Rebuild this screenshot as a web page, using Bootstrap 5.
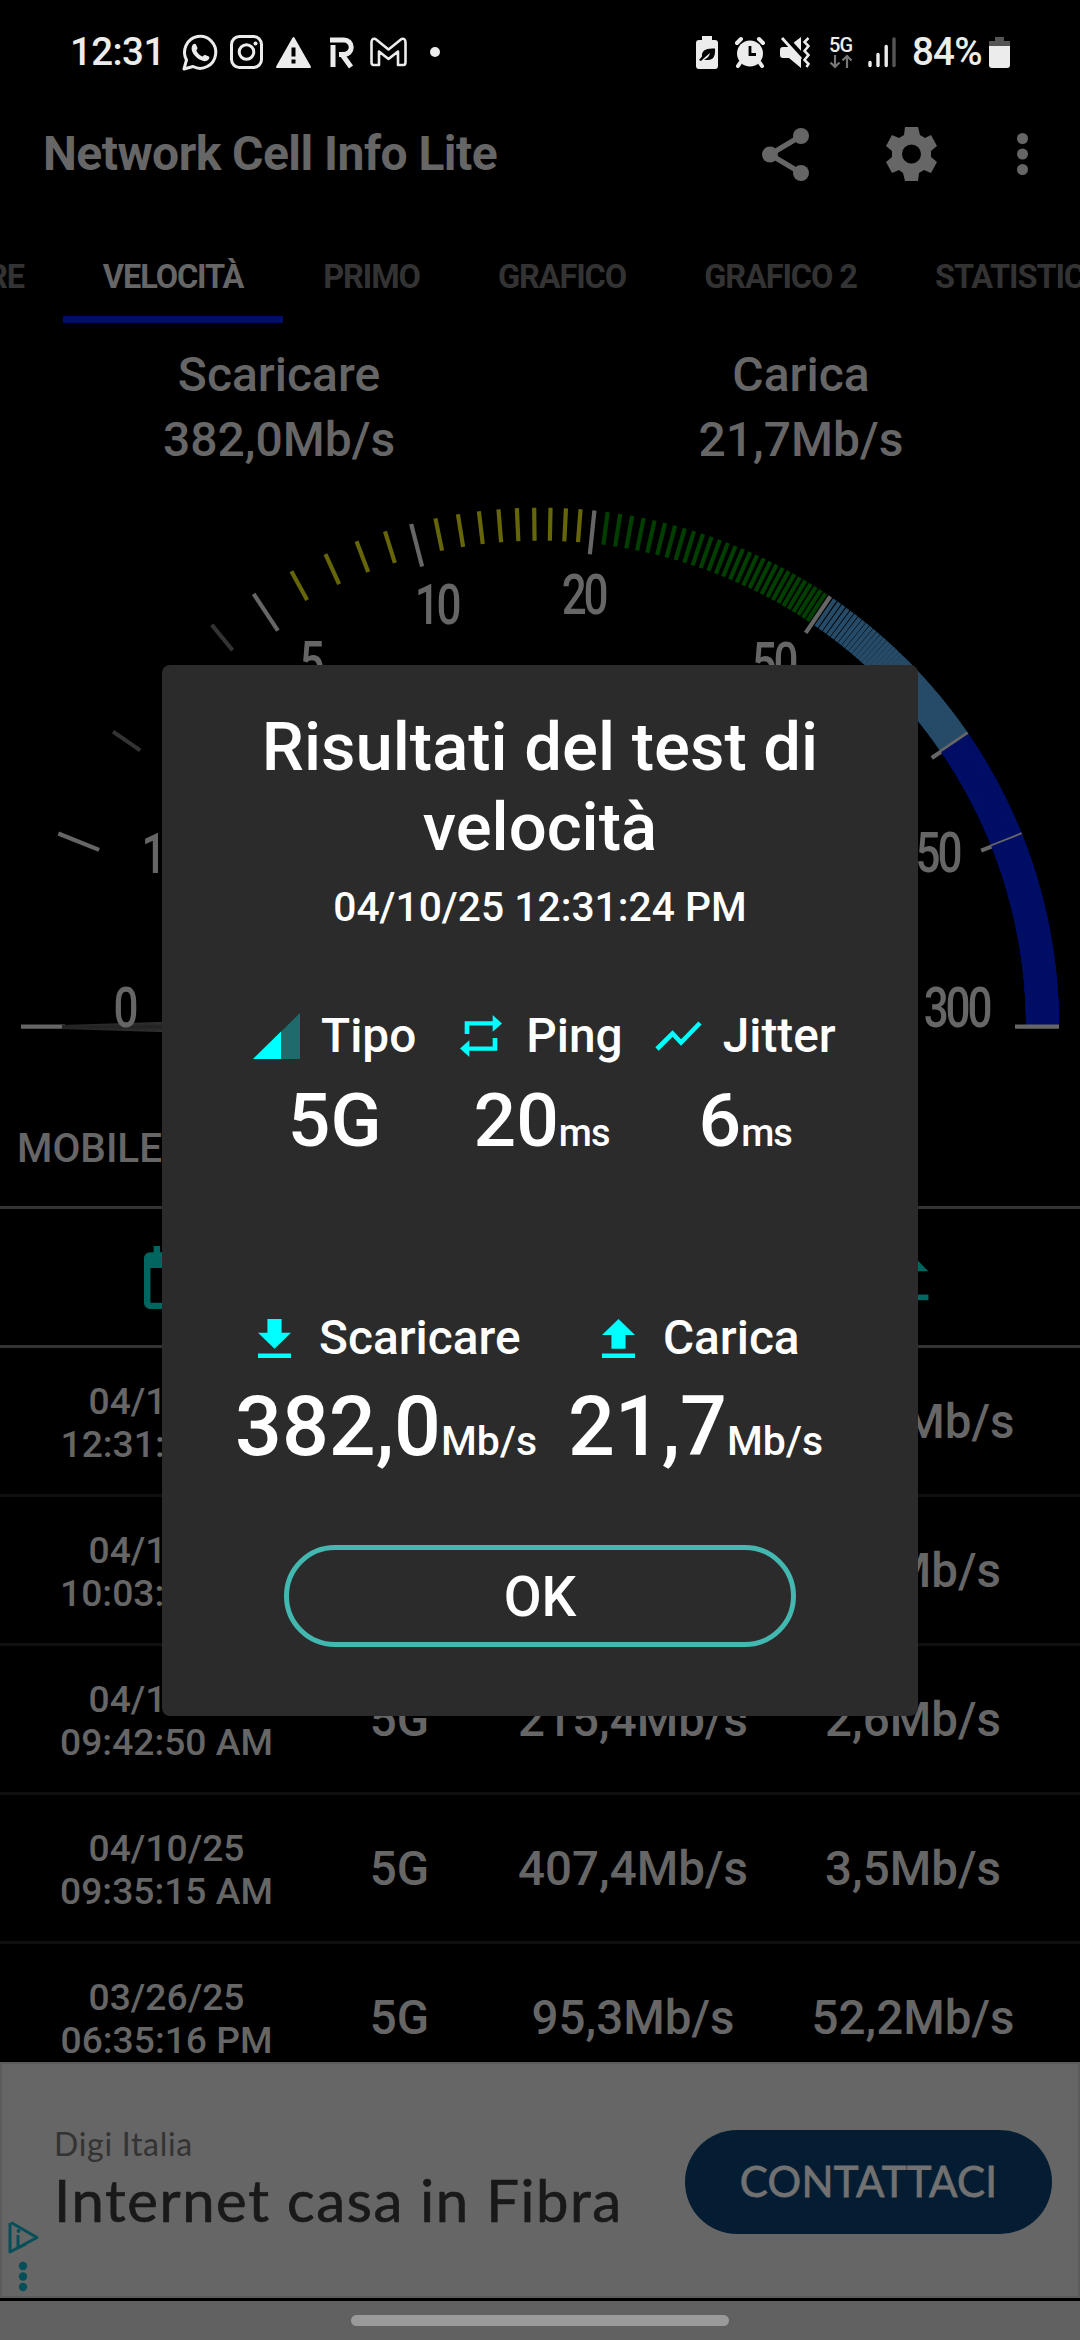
<!DOCTYPE html>
<html lang="it">
<head>
<meta charset="utf-8">
<meta name="viewport" content="width=device-width, initial-scale=1">
<title>Network Cell Info Lite</title>
<link href="https://cdn.jsdelivr.net/npm/bootstrap@5.3.0/dist/css/bootstrap.min.css" rel="stylesheet">
<style>
  body { background:#000; color:#666; font-family:Roboto,"Liberation Sans",sans-serif; font-weight:500; width:1080px; overflow:hidden; }
  svg { display:block; flex:none; overflow:visible; }
  .phone { width:1080px; height:2340px; }
  .status { height:104px; color:#ececec; font-size:38.5px; line-height:44px; padding-left:70px; }
  .status .clock { width:93px; letter-spacing:-.6px; }
  .status .pct { width:71px; letter-spacing:-.8px; }
  .appbar { height:100px; padding-left:43px; }
  .appbar h1 { font-size:48px; font-weight:700; letter-spacing:-.55px; width:719px; line-height:60px; }
  .tabstrip { height:119px; margin-left:-62px; }
  .tabstrip .nav-link { color:#333; border-radius:0; font-size:32.5px; font-weight:700; letter-spacing:-1.1px; line-height:56px; padding:45px 0 11px; border-bottom:7px solid transparent; text-align:center; white-space:nowrap; flex:none; }
  .tabstrip .nav-link.active { color:#666; border-color:#000e66; background:none; }
  .speeds { padding:19px 18px 0; font-size:48px; line-height:65px; height:149px; }
  .net { height:106px; font-size:40.5px; line-height:96px; padding-left:17px; }
  .icons-row { height:142px; border-top:3px solid #333; border-bottom:3px solid #333; }
  .history { height:714px; }
  .hrow { height:149px; padding-top:3px; border-bottom:3px solid #0f0f0f; font-size:47.5px; flex:none; }
  .c-date { width:333px; } .c-type { width:133px; } .c-down { width:334px; } .c-up { width:226px; }
  .when { font-size:37.2px; line-height:43px; }
  .ad { height:236px; background:#666; border:2px solid #5c5c5c; font-family:Lato,sans-serif; padding:0 26px 0 4px; }
  .ad .side { width:48px; padding-top:156px; }
  .ad .brand { color:#333; font-size:32px; line-height:38px; font-weight:400; letter-spacing:.7px; margin-top:61px; }
  .ad .headline { color:#191919; font-size:58px; line-height:70px; margin-top:2px; letter-spacing:1.6px; -webkit-text-stroke:.7px #191919; white-space:nowrap; font-weight:400; }
  .ad .cta { width:367px; height:104px; background:#041d33; color:#717171; border:0; font-size:42px; letter-spacing:.3px; -webkit-text-stroke:.8px #717171; margin-top:3px; }
  .navzone { height:39px; margin-top:3px; background:#616161; padding-top:14px; }
  .navzone div { width:378px; height:11px; background:#9a9a9a; }
  .result { left:162px; top:665px; width:756px; height:1051px; background:#2b2b2b; border-radius:8px; color:#fff; padding-top:42px; }
  .result h2 { font-size:67px; line-height:80px; font-weight:500; }
  .result .stamp { font-size:40.8px; line-height:48px; margin-top:16px; }
  .result .lbl { font-size:47.8px; line-height:60px; }
  .result .big { line-height:90px; white-space:nowrap; }
  .unit { font-size:41px; }
  .unit-ms { font-size:38px; letter-spacing:-1px; }
  .m-top { margin:75px 0 0 91px; }
  .m-top .big { font-size:75px; margin-top:9px; }
  .m-bot { margin:130px 95px 0 73px; }
  .m-bot .big { font-size:82.500px; margin-top:14px; }
  .ok { width:512px; height:102px; border:5px solid #43b8b0; color:#fff; font-size:55px; font-weight:500; line-height:92px; padding:1px 0 0; margin-top:59px; }
</style>
</head>
<body>
<div class="phone position-relative overflow-hidden d-flex flex-column">

  <div class="status d-flex align-items-center">
    <span class="clock">12:31</span>
    <svg style="margin-left:19px" width="36" height="37" viewBox="0 0 36 37" fill="none" stroke="#ececec"><path d="M2 35l2.500-9A15.600 16 0 1 1 11 32.500Z" stroke-width="3" stroke-linejoin="round"/><path d="M11 10.500c1-1 2.500-1 3 0l1.500 3.500c.3 1-1.500 2-1 3 1.300 2.500 3.200 4.300 5.800 5.400 1 .4 2-2 3-1.500l3.500 1.700c1 .6.6 2-.3 3-1.500 1.700-4 2-6.500 1C15 24.800 11.500 21 10 17c-1-3 0-5.500 1-6.500z" fill="#ececec" stroke="none"/></svg>
    <svg style="margin-left:12px" width="33" height="34" viewBox="0 0 33 34" fill="none" stroke="#ececec" stroke-width="3"><rect x="1.500" y="1.500" width="30" height="31" rx="8"/><circle cx="16.500" cy="17" r="7.300"/><circle cx="25.500" cy="8.500" r="2" fill="#ececec" stroke="none"/></svg>
    <svg style="margin-left:13px" width="35" height="31" viewBox="0 0 35 31"><path d="M17.500 1L34 30H1Z" fill="#ececec" stroke="#ececec" stroke-linejoin="round" stroke-width="2"/><path d="M15.500 10.500h4v9h-4zM15.500 22.500h4v4h-4z" fill="#000"/></svg>
    <svg style="margin-left:19px" width="24" height="31" viewBox="0 0 24 31" fill="none" stroke="#ececec" stroke-width="5"><path d="M0 3h14a6.500 6.500 0 0 1 0 14.500h-5M3 30V8M11 16l10 14"/></svg>
    <svg style="margin-left:16px" width="37" height="30" viewBox="0 0 37 30" fill="none" stroke="#ececec" stroke-width="2.600" stroke-linejoin="round"><path d="M1.500 5.500Q1.500 1 5.500 2L18.500 12.500 31.500 2Q35.500 1 35.500 5.500V25q0 3-2 3H28V14.500L18.500 22 9 14.500V28H3.500q-2 0-2-3Z"/></svg>
    <svg style="margin-left:23px" width="10" height="10"><circle cx="5" cy="5" r="5" fill="#ececec"/></svg>

    <svg style="margin-left:256px" width="22" height="33" viewBox="0 0 22 33"><path d="M6 0h10v4h3q3 0 3 3v23q0 3-3 3H3q-3 0-3-3V7q0-3 3-3h3z" fill="#ececec"/><path d="M6 20.500q-1-9 13-8 1 14-11 11Q13 22 14 17 9 21 5 25l-2-1z" fill="#000"/></svg>
    <svg style="margin-left:17px" width="30" height="31" viewBox="0 0 30 31"><g stroke="#ececec" stroke-width="4" stroke-linecap="round"><path d="M2 6l4-4M28 6l-4-4M5 26l-2 3M25 26l2 3"/></g><circle cx="15" cy="16.500" r="13" fill="#ececec"/><path d="M15 9v8.500h6" fill="none" stroke="#000" stroke-width="2.800"/></svg>
    <svg style="margin-left:15px" width="30" height="31" viewBox="0 0 30 31"><path d="M0 13q0-3 3-3h5L21 0v31L9 21H3q-3 0-3-3z" fill="#ececec"/><path d="M3 -2l20 22" stroke="#000" stroke-width="5.500"/><path d="M2 1l19 21" stroke="#ececec" stroke-width="2.800"/><path d="M28.500 1l-4 4 4 4-4 5 4 4-4 5 4 4-2 3" fill="none" stroke="#ececec" stroke-width="2.500"/></svg>
    <svg style="margin-left:19px" width="25" height="35" viewBox="0 0 25 35"><text x="0" y="16.500" font-size="20" textLength="24" fill="#ececec">5G</text><path d="M6 20v12M1.500 27.500L6 32l4.500-4.500M18 33V21M13.500 25.500L18 21l4.500 4.500" fill="none" stroke="#777" stroke-width="2.200"/></svg>
    <svg style="margin-left:14px" width="29" height="31" viewBox="0 0 29 31" stroke-width="3.400" stroke-linecap="round" stroke="#ececec"><path d="M2 25.500v3M10 17.500v11M18.200 9.500v19"/><path d="M26 2v26.500" stroke="#555"/></svg>
    <span class="pct" style="margin-left:15px">84%</span>
    <svg style="margin-left:6px" width="21" height="31" viewBox="0 0 21 31"><path d="M6 0h9v4h6v6H0V4h6z" fill="#555"/><path d="M0 9h21v19q0 3-3 3H3q-3 0-3-3z" fill="#ececec"/></svg>
  </div>

  <header class="appbar d-flex align-items-center">
    <h1 class="m-0">Network Cell Info Lite</h1>
    <svg width="47" height="53" viewBox="0 0 47 53"><g fill="#666"><circle cx="39" cy="8" r="8"/><circle cx="8" cy="26.500" r="8"/><circle cx="39" cy="45" r="8"/></g><path d="M39 8L8 26.500 39 45" fill="none" stroke="#666" stroke-width="5.300"/></svg>
    <svg style="margin-left:77px" width="51" height="54" viewBox="0 0 51 54"><path fill="#666" fill-rule="evenodd" d="M19 0h13l2 8 5 3 6-3 6 11-6 5v6l6 5-6 11-7-3-5 3-1 8H19l-2-8-4-3-7 3-6-11 6-5v-6l-6-5 6-11 7 3 5-3zM25.500 17.500a9.500 9.500 0 1 0 0 19 9.500 9.500 0 1 0 0-19z"/></svg>
    <svg style="margin-left:80px" width="11" height="42" fill="#666"><circle cx="5.500" cy="5.500" r="5.500"/><circle cx="5.500" cy="21" r="5.500"/><circle cx="5.500" cy="36.500" r="5.500"/></svg>
  </header>

  <nav class="nav nav-pills tabstrip flex-nowrap">
    <a class="nav-link text-end" style="width:125px"><span style="padding-right:39px">PERE</span></a>
    <a class="nav-link active" style="width:220px">VELOCITÀ</a>
    <a class="nav-link" style="width:177px">PRIMO</a>
    <a class="nav-link" style="width:204px">GRAFICO</a>
    <a class="nav-link" style="width:233px">GRAFICO 2</a>
    <a class="nav-link" style="width:264px">STATISTICHE</a>
  </nav>

  <section class="speeds row g-0 text-center">
    <div class="col-6"><div>Scaricare</div><div>382,0Mb/s</div></div>
    <div class="col-6"><div>Carica</div><div>21,7Mb/s</div></div>
  </section>

  <svg id="gauge" width="1080" height="628" viewBox="0 472 1080 628">
    <defs><linearGradient id="needle" x1="0" x2="0" y1="0" y2="1"><stop offset="0" stop-color="#555"/><stop offset=".5" stop-color="#222"/><stop offset="1" stop-color="#555"/></linearGradient></defs>
    <g id="ticks" stroke-width="4.200"></g>
    <path d="M62 1025L540 1010V1044L62 1029Z" fill="url(#needle)"/>
    <g id="nums" fill="#666" font-size="55" font-weight="500" letter-spacing="-4" text-anchor="middle"></g>
  </svg>

  <div class="net">MOBILE</div>

  <div class="icons-row d-flex align-items-center">
    <div class="c-date d-flex justify-content-center" style="padding-left:12px"><svg width="58" height="63" viewBox="3 1 18 20" preserveAspectRatio="none"><path fill="#00665f" d="M19 3h-1V1h-2v2H8V1H6v2H5c-1.100 0-2 .9-2 2v14c0 1.100.9 2 2 2h14c1.100 0 2-.9 2-2V5c0-1.100-.9-2-2-2zm0 16H5V8h14v11z"/></svg></div>
    <div class="c-type"></div>
    <div class="c-down d-flex justify-content-center"><svg width="70" height="70" viewBox="0 0 24 24"><path fill="#00665f" d="M19 9h-4V3H9v6H5l7 7 7-7zM5 18v2h14v-2H5z"/></svg></div>
    <div class="c-up d-flex justify-content-center" style="padding-right:11px"><svg width="70" height="70" viewBox="0 0 24 24"><path fill="#00665f" d="M9 16h6v-6h4l-7-7-7 7h4zM5 18h14v2H5z"/></svg></div>
  </div>

  <div class="history d-flex flex-column overflow-hidden text-center">
    <div class="hrow d-flex align-items-center"><div class="c-date when">04/10/25<br>12:31:24 PM</div><div class="c-type">5G</div><div class="c-down">382,0Mb/s</div><div class="c-up">21,7Mb/s</div></div>
    <div class="hrow d-flex align-items-center"><div class="c-date when">04/10/25<br>10:03:12 AM</div><div class="c-type">5G</div><div class="c-down">398,1Mb/s</div><div class="c-up">3,1Mb/s</div></div>
    <div class="hrow d-flex align-items-center"><div class="c-date when">04/10/25<br>09:42:50 AM</div><div class="c-type">5G</div><div class="c-down">215,4Mb/s</div><div class="c-up">2,6Mb/s</div></div>
    <div class="hrow d-flex align-items-center"><div class="c-date when">04/10/25<br>09:35:15 AM</div><div class="c-type">5G</div><div class="c-down">407,4Mb/s</div><div class="c-up">3,5Mb/s</div></div>
    <div class="hrow d-flex align-items-center"><div class="c-date when">03/26/25<br>06:35:16 PM</div><div class="c-type">5G</div><div class="c-down">95,3Mb/s</div><div class="c-up">52,2Mb/s</div></div>
  </div>

  <div class="ad d-flex">
    <div class="side"><svg width="34" height="74" viewBox="0 0 34 74"><path d="M4 3v29L31 17.500 5 2.500M12 15v13l8-4" fill="none" stroke="#064f59" stroke-width="3" stroke-linejoin="round"/><g fill="#064f59"><circle cx="12.500" cy="11" r="2"/><circle cx="17" cy="46" r="4.200"/><circle cx="17" cy="56.500" r="4.200"/><circle cx="17" cy="67" r="4.200"/></g></svg></div>
    <div class="flex-grow-1"><div class="brand">Digi Italia</div><div class="headline">Internet casa in Fibra</div></div>
    <button class="btn cta rounded-pill align-self-center p-0">CONTATTACI</button>
  </div>
  <div class="navzone"><div class="rounded-pill mx-auto"></div></div>

  <div class="result position-absolute text-center" role="dialog">
    <h2 class="m-0">Risultati del test di<br>velocità</h2>
    <div class="stamp">04/10/25 12:31:24 PM</div>
    <div class="m-top d-flex">
      <div>
        <div class="lbl d-flex align-items-center"><svg width="47" height="46" viewBox="0 0 47 46"><path d="M47 0V46H0Z" fill="#1f6b6b"/><path d="M28 18.600V46H0Z" fill="#0ff"/></svg><span style="margin-left:21px">Tipo</span></div>
        <div class="big">5G</div>
      </div>
      <div style="margin-left:44px">
        <div class="lbl d-flex align-items-center"><svg width="42" height="46" viewBox="3 1 18 22" preserveAspectRatio="none"><path fill="#0ff" d="M7 7h10v3l4-4-4-4v3H5v6h2V7zm10 10H7v-3l-4 4 4 4v-3h12v-6h-2v4z"/></svg><span style="margin-left:24px">Ping</span></div>
        <div class="big">20<span class="unit-ms">ms</span></div>
      </div>
      <div style="margin-left:32px">
        <div class="lbl d-flex align-items-center"><svg width="47" height="30" viewBox="0 0 47 30"><path d="M2 28L17.500 12.500 26 21.500 45 2" fill="none" stroke="#0ff" stroke-width="4.600"/></svg><span style="margin-left:21px">Jitter</span></div>
        <div class="big">6<span class="unit-ms">ms</span></div>
      </div>
    </div>
    <div class="m-bot d-flex justify-content-between">
      <div>
        <div class="lbl d-flex align-items-center" style="padding-left:23px"><svg width="33" height="39" viewBox="5 3 14 17" preserveAspectRatio="none"><path fill="#0ff" d="M19 9h-4V3H9v6H5l7 7 7-7zM5 18v2h14v-2H5z"/></svg><span style="margin-left:28px">Scaricare</span></div>
        <div class="big">382,0<span class="unit">Mb/s</span></div>
      </div>
      <div>
        <div class="lbl d-flex align-items-center" style="padding-left:34px"><svg width="33" height="39" viewBox="5 3 14 17" preserveAspectRatio="none"><path fill="#0ff" d="M9 16h6v-6h4l-7-7-7 7h4zM5 18h14v2H5z"/></svg><span style="margin-left:28px">Carica</span></div>
        <div class="big">21,7<span class="unit">Mb/s</span></div>
      </div>
    </div>
    <button class="btn ok rounded-pill">OK</button>
  </div>
</div>

<script src="https://cdn.jsdelivr.net/npm/bootstrap@5.3.0/dist/js/bootstrap.bundle.min.js"></script>
<script>
  // Logarithmic dial: one tick per Mb/s from 0 to 300
  const NS = 'http://www.w3.org/2000/svg', cx = 540, cy = 1026.7, R = 519;
  const majors = [0, 1, 5, 10, 20, 50, 100, 150, 300];
  const ticks = document.getElementById('ticks'), nums = document.getElementById('nums');
  for (let v = 0; v <= 300; v++) {
    const a = Math.PI * Math.log(1 + v) / Math.log(301), big = majors.includes(v), r = R - (big ? 44 : 33);
    const l = document.createElementNS(NS, 'line');
    l.setAttribute('x1', cx - R * Math.cos(a)); l.setAttribute('y1', cy - R * Math.sin(a));
    l.setAttribute('x2', cx - r * Math.cos(a)); l.setAttribute('y2', cy - r * Math.sin(a));
    l.setAttribute('stroke', big ? '#666' : v < 5 ? '#333' : v < 20 ? '#666609' : v < 50 ? '#003f00' : v < 100 ? '#264b68' : '#000e66');
    ticks.appendChild(l);
  }
  [[0,126,1027],[1,154,873],[5,312,681],[10,438,624],[20,585,613.5],[50,775,682],[150,928,872],[300,958,1027]].forEach(([t, x, y]) => {
    const e = document.createElementNS(NS, 'text');
    e.textContent = t;
    e.setAttribute('transform', `translate(${x - 1.5} ${y}) scale(.8 1)`);
    nums.appendChild(e);
  });
</script>
</body>
</html>
